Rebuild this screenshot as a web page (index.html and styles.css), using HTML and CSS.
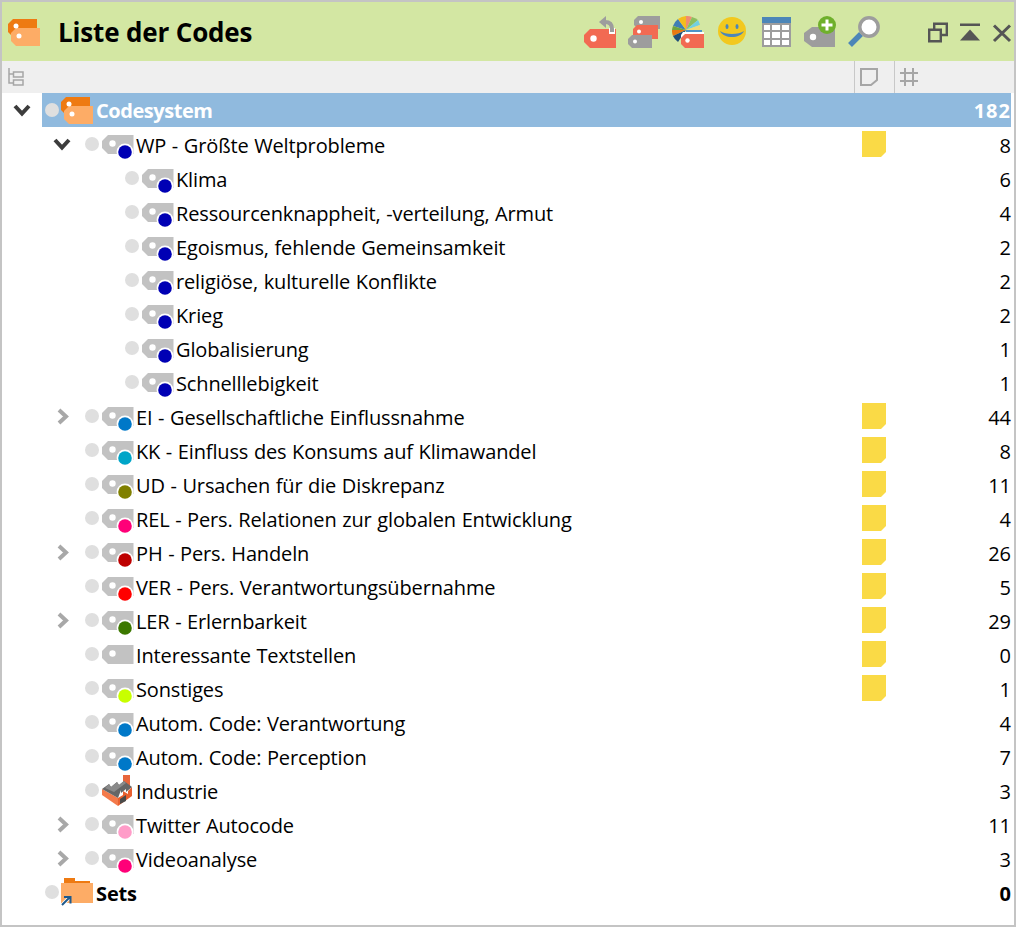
FILE: index.html
```html
<!DOCTYPE html>
<html lang="de">
<head>
<meta charset="utf-8">
<title>Liste der Codes</title>
<link rel="stylesheet" href="styles.css">
</head>
<body>
<svg class="defs" width="0" height="0" aria-hidden="true">
  <symbol id="tag" viewBox="0 0 32 28">
    <path fill="#c2c2c2" d="M6 0H31.500V19H6L0 13V6Z"/>
    <circle cx="10.500" cy="8.500" r="3.200" fill="#fff"/>
    <circle cx="23" cy="17" r="8.400" fill="#fff"/>
    <circle cx="23" cy="17" r="6.800" fill="currentColor"/>
  </symbol>
  <symbol id="tag-plain" viewBox="0 0 32 28">
    <path fill="#c2c2c2" d="M6 0H31.500V19H6L0 13V6Z"/>
    <circle cx="10.500" cy="8.500" r="3.200" fill="#fff"/>
  </symbol>
  <symbol id="codes" viewBox="0 0 32 27">
    <path fill="#ee7a12" d="M5 0H29V18H5L0 13V5Z"/>
    <path fill="#fdac66" d="M8 9H32V27H8L3 22V14Z"/>
    <circle cx="8" cy="7" r="2.500" fill="#fff"/>
    <circle cx="11" cy="17" r="2.500" fill="#fff"/>
  </symbol>
  <symbol id="memo" viewBox="0 0 24 26">
    <path fill="#fada46" d="M0 0H24V21L19 26H0Z"/>
  </symbol>
</svg>

<main class="window">
  <header class="titlebar">
    <svg class="title-icon"><use href="#codes"/></svg>
    <h1 class="title">Liste der Codes</h1>
    <div class="tools">
      <svg class="tool" viewBox="0 0 32 32">
        <path fill="#f26a52" d="M6 13H32V32H6L0 26V19Z"/>
        <circle cx="9.500" cy="22.500" r="3.200" fill="#fff"/>
        <rect x="25" y="12" width="6" height="6" fill="#fff"/>
        <path fill="none" stroke="#9d9d9d" stroke-width="4" d="M28 16V13C28 9 26 6 21 6"/>
        <path fill="#9d9d9d" d="M22 0V12L15 6Z"/>
      </svg>
      <svg class="tool" viewBox="0 0 32 32">
        <path fill="#9d9d9d" d="M10 0H32V13H10L6 9V4Z"/>
        <path fill="#f26a52" d="M9 9H30V23H9L5 19V13Z"/>
        <path fill="#9d9d9d" d="M4 19H24V32H4L0 28V23Z"/>
        <circle cx="13" cy="6" r="2" fill="#fff"/>
        <circle cx="11" cy="15.500" r="2" fill="#fff"/>
        <circle cx="7" cy="25.500" r="2" fill="#fff"/>
      </svg>
      <svg class="tool" viewBox="0 0 32 32">
        <path fill="#3f7fb5" d="M14 14L1 10A15 15 0 0 1 6 3Z"/>
        <path fill="#f3bd1e" d="M14 14L6 3A15 15 0 0 1 14 0Z"/>
        <path fill="#f08c72" d="M14 14V0A15 15 0 0 1 20 1Z"/>
        <path fill="#8cbf5e" d="M14 14L20 1A15 15 0 0 1 26 4Z"/>
        <path fill="#72cfe0" d="M14 14L26 4A15 15 0 0 1 28 9Z"/>
        <path fill="#f0dc78" d="M14 14L28 9V14Z"/>
        <path fill="#6fa53f" d="M14 14L1 10A15 15 0 0 0 0 14Z"/>
        <path fill="#e87a12" d="M14 14H0A15 15 0 0 0 1 20Z"/>
        <path fill="#214f7a" d="M14 14L1 20A15 15 0 0 0 6 26Z"/>
        <path fill="#4c94c8" d="M14 14H30V18H14Z"/>
        <path fill="#fff" d="M11 16H32V18H14L11 20V27H9V19Z"/>
        <path fill="#f26a52" d="M13 18H32V32H13L9 28V22Z"/>
        <circle cx="15.500" cy="24.500" r="2.200" fill="#fff"/>
      </svg>
      <svg class="tool" viewBox="0 0 32 32">
        <circle cx="16" cy="15" r="14" fill="#f2c81e"/>
        <ellipse cx="11" cy="10.500" rx="1.500" ry="2.500" fill="#4c86b8"/>
        <ellipse cx="21" cy="10.500" rx="1.500" ry="2.500" fill="#4c86b8"/>
        <path fill="#4c86b8" d="M4 15C9 19 23 19 28 15C24 23 8 23 4 15Z"/>
      </svg>
      <svg class="tool" viewBox="0 0 32 32">
        <rect x="2" y="1" width="29" height="30" fill="#9d9d9d"/>
        <rect x="2" y="1" width="29" height="6" fill="#4c86b8"/>
        <path fill="#fff" d="M4 9H10V14H4ZM12 9H20V14H12ZM22 9H29V14H22ZM4 16H10V22H4ZM12 16H20V22H12ZM22 16H29V22H22ZM4 24H10V29H4ZM12 24H20V29H12ZM22 24H29V29H22Z"/>
      </svg>
      <svg class="tool" viewBox="0 0 32 32">
        <path fill="#9d9d9d" d="M8 11H31V31H8L0 25V17Z"/>
        <circle cx="9" cy="21" r="3.200" fill="#fff"/>
        <circle cx="23" cy="9" r="9" fill="#6fb02c"/>
        <path stroke="#fff" stroke-width="3" d="M23 3.500V14.500M17.500 9H28.500"/>
      </svg>
      <svg class="tool" viewBox="0 0 32 32">
        <path stroke="#4c86b8" stroke-width="5.500" d="M2 29L13 18"/>
        <circle cx="21" cy="11" r="9.200" fill="#fff" stroke="#9d9d9d" stroke-width="3.400"/>
      </svg>
    </div>
    <div class="winbtns">
      <svg class="winbtn" viewBox="0 0 24 24">
        <path fill="none" stroke="#555" stroke-width="2.400" d="M8.200 9V3.700H20.800V15H15"/>
        <path fill="none" stroke="#555" stroke-width="2.400" d="M3.200 9.700H14.800V21.300H3.200Z"/>
      </svg>
      <svg class="winbtn" viewBox="0 0 24 24">
        <rect x="2" y="3.500" width="20" height="2.500" fill="#555"/>
        <path fill="#555" d="M12 9.500L22 20.500H2Z"/>
      </svg>
      <svg class="winbtn" viewBox="0 0 24 24">
        <path stroke="#555" stroke-width="3" d="M4 5.500L20 21M20 5.500L4 21"/>
      </svg>
    </div>
  </header>

  <div class="colhead">
    <svg class="col-tree" viewBox="0 0 16 18">
      <path fill="none" stroke="#a6a6a6" stroke-width="1.500" d="M1 0V15H5M1 6H5M5.500 4H15V9H5.500ZM5.500 12H15V17H5.500Z"/>
    </svg>
    <div class="col-memo">
      <svg class="col-icon" viewBox="0 0 20 20">
        <path fill="none" stroke="#a6a6a6" stroke-width="2" d="M2 2H18V13L12 18H2Z"/>
      </svg>
    </div>
    <div class="col-count">
      <svg class="col-icon" viewBox="0 0 20 20">
        <path stroke="#a6a6a6" stroke-width="2" d="M6 1V19M14 1V19M1 6H19M1 14H19"/>
      </svg>
    </div>
  </div>

  <div class="tree">
    <div class="row l0">
      <svg class="toggle open" viewBox="0 0 40 34"><path d="M13 13L20 20.500L27 13"/></svg>
      <div class="body root">
        <span class="dot"></span>
        <svg class="icon"><use href="#codes"/></svg>
        <span class="label">Codesystem</span>
        <span class="memo"></span>
        <span class="count">182</span>
      </div>
    </div>

    <div class="row l1">
      <svg class="toggle open" viewBox="0 0 40 34"><path d="M13 13L20 20.500L27 13"/></svg>
      <div class="body">
        <span class="dot"></span><svg class="icon c-navy"><use href="#tag"/></svg>
        <span class="label">WP - Größte Weltprobleme</span>
        <span class="memo"><svg class="note"><use href="#memo"/></svg></span>
        <span class="count">8</span>
      </div>
    </div>

    <div class="row l2"><span class="toggle"></span><div class="body"><span class="dot"></span><svg class="icon c-navy"><use href="#tag"/></svg><span class="label">Klima</span><span class="memo"></span><span class="count">6</span></div></div>
    <div class="row l2"><span class="toggle"></span><div class="body"><span class="dot"></span><svg class="icon c-navy"><use href="#tag"/></svg><span class="label">Ressourcenknappheit, -verteilung, Armut</span><span class="memo"></span><span class="count">4</span></div></div>
    <div class="row l2"><span class="toggle"></span><div class="body"><span class="dot"></span><svg class="icon c-navy"><use href="#tag"/></svg><span class="label">Egoismus, fehlende Gemeinsamkeit</span><span class="memo"></span><span class="count">2</span></div></div>
    <div class="row l2"><span class="toggle"></span><div class="body"><span class="dot"></span><svg class="icon c-navy"><use href="#tag"/></svg><span class="label">religiöse, kulturelle Konflikte</span><span class="memo"></span><span class="count">2</span></div></div>
    <div class="row l2"><span class="toggle"></span><div class="body"><span class="dot"></span><svg class="icon c-navy"><use href="#tag"/></svg><span class="label">Krieg</span><span class="memo"></span><span class="count">2</span></div></div>
    <div class="row l2"><span class="toggle"></span><div class="body"><span class="dot"></span><svg class="icon c-navy"><use href="#tag"/></svg><span class="label">Globalisierung</span><span class="memo"></span><span class="count">1</span></div></div>
    <div class="row l2"><span class="toggle"></span><div class="body"><span class="dot"></span><svg class="icon c-navy"><use href="#tag"/></svg><span class="label">Schnelllebigkeit</span><span class="memo"></span><span class="count">1</span></div></div>

    <div class="row l1"><svg class="toggle closed" viewBox="0 0 40 34"><path d="M17 11L24 17.500L17 24"/></svg><div class="body"><span class="dot"></span><svg class="icon c-blue"><use href="#tag"/></svg><span class="label">EI - Gesellschaftliche Einflussnahme</span><span class="memo"><svg class="note"><use href="#memo"/></svg></span><span class="count">44</span></div></div>
    <div class="row l1"><span class="toggle"></span><div class="body"><span class="dot"></span><svg class="icon c-cyan"><use href="#tag"/></svg><span class="label">KK - Einfluss des Konsums auf Klimawandel</span><span class="memo"><svg class="note"><use href="#memo"/></svg></span><span class="count">8</span></div></div>
    <div class="row l1"><span class="toggle"></span><div class="body"><span class="dot"></span><svg class="icon c-olive"><use href="#tag"/></svg><span class="label">UD - Ursachen für die Diskrepanz</span><span class="memo"><svg class="note"><use href="#memo"/></svg></span><span class="count">11</span></div></div>
    <div class="row l1"><span class="toggle"></span><div class="body"><span class="dot"></span><svg class="icon c-pink"><use href="#tag"/></svg><span class="label">REL - Pers. Relationen zur globalen Entwicklung</span><span class="memo"><svg class="note"><use href="#memo"/></svg></span><span class="count">4</span></div></div>
    <div class="row l1"><svg class="toggle closed" viewBox="0 0 40 34"><path d="M17 11L24 17.500L17 24"/></svg><div class="body"><span class="dot"></span><svg class="icon c-dark-red"><use href="#tag"/></svg><span class="label">PH - Pers. Handeln</span><span class="memo"><svg class="note"><use href="#memo"/></svg></span><span class="count">26</span></div></div>
    <div class="row l1"><span class="toggle"></span><div class="body"><span class="dot"></span><svg class="icon c-red"><use href="#tag"/></svg><span class="label">VER - Pers. Verantwortungsübernahme</span><span class="memo"><svg class="note"><use href="#memo"/></svg></span><span class="count">5</span></div></div>
    <div class="row l1"><svg class="toggle closed" viewBox="0 0 40 34"><path d="M17 11L24 17.500L17 24"/></svg><div class="body"><span class="dot"></span><svg class="icon c-green"><use href="#tag"/></svg><span class="label">LER - Erlernbarkeit</span><span class="memo"><svg class="note"><use href="#memo"/></svg></span><span class="count">29</span></div></div>
    <div class="row l1"><span class="toggle"></span><div class="body"><span class="dot"></span><svg class="icon"><use href="#tag-plain"/></svg><span class="label">Interessante Textstellen</span><span class="memo"><svg class="note"><use href="#memo"/></svg></span><span class="count">0</span></div></div>
    <div class="row l1"><span class="toggle"></span><div class="body"><span class="dot"></span><svg class="icon c-lime"><use href="#tag"/></svg><span class="label">Sonstiges</span><span class="memo"><svg class="note"><use href="#memo"/></svg></span><span class="count">1</span></div></div>
    <div class="row l1"><span class="toggle"></span><div class="body"><span class="dot"></span><svg class="icon c-blue"><use href="#tag"/></svg><span class="label">Autom. Code: Verantwortung</span><span class="memo"></span><span class="count">4</span></div></div>
    <div class="row l1"><span class="toggle"></span><div class="body"><span class="dot"></span><svg class="icon c-blue"><use href="#tag"/></svg><span class="label">Autom. Code: Perception</span><span class="memo"></span><span class="count">7</span></div></div>
    <div class="row l1"><span class="toggle"></span><div class="body"><span class="dot"></span>
      <svg class="icon factory" viewBox="0 0 32 32">
        <rect x="21" y="0" width="7" height="11" fill="#e8663c"/>
        <path fill="#f47a4a" d="M0 14V20L16 31V23Z"/>
        <path fill="#e8602f" d="M16 31L30 21V12L26 16V19L21 16V20L16 23Z"/>
        <path fill="#666" d="M0 14L7 9L9 12L15 7L17 10L22 6L30 12L24 17V14L19 18V15L16 23Z"/>
        <path fill="#8a8a8a" d="M3 13L7 9L9 12L15 7L17 10L22 6L24 8L12 17Z"/>
        <path fill="#4a4a4a" d="M18 24L24 20V26L18 29Z"/>
      </svg>
      <span class="label">Industrie</span><span class="memo"></span><span class="count">3</span></div></div>
    <div class="row l1"><svg class="toggle closed" viewBox="0 0 40 34"><path d="M17 11L24 17.500L17 24"/></svg><div class="body"><span class="dot"></span><svg class="icon c-rose"><use href="#tag"/></svg><span class="label">Twitter Autocode</span><span class="memo"></span><span class="count">11</span></div></div>
    <div class="row l1"><svg class="toggle closed" viewBox="0 0 40 34"><path d="M17 11L24 17.500L17 24"/></svg><div class="body"><span class="dot"></span><svg class="icon c-pink"><use href="#tag"/></svg><span class="label">Videoanalyse</span><span class="memo"></span><span class="count">3</span></div></div>

    <div class="row l0">
      <span class="toggle"></span>
      <div class="body strong">
        <span class="dot"></span>
        <svg class="icon" viewBox="0 0 32 32">
          <path fill="#ee7a12" d="M3 0H14V3H29V6H3Z"/>
          <path fill="#fdac66" d="M0 5H32V25H0Z"/>
          <path fill="none" stroke="#fff" stroke-width="3.500" d="M2 26L8 20"/>
          <path fill="none" stroke="#1f5a8c" stroke-width="2" d="M1 27L9 19M3 19H9.500V25.500"/>
        </svg>
        <span class="label">Sets</span>
        <span class="memo"></span>
        <span class="count">0</span>
      </div>
    </div>
  </div>
</main>
</body>
</html>
```
FILE: styles.css
```css
* { box-sizing: border-box; }

html, body {
  margin: 0;
  padding: 0;
  background: #fff;
}

.defs { position: absolute; }

.window {
  width: 1016px;
  height: 927px;
  border: 2px solid #c4c4c4;
  background: #fff;
  font-family: "Open Sans", "Noto Sans", sans-serif;
  color: #000;
  overflow: hidden;
}

.titlebar {
  height: 59px;
  display: flex;
  align-items: center;
  background: #d3e7a3;
  padding-left: 6px;
}

.title-icon {
  width: 32px;
  height: 27px;
  flex: none;
  margin-top: 2px;
}

.title {
  margin: 0 0 0 18px;
  font-size: 26px;
  font-weight: 700;
  line-height: 34px;
  letter-spacing: -0.16px;
}

.tools {
  margin-left: auto;
  display: flex;
  gap: 12px;
}

.tool {
  width: 32px;
  height: 32px;
  display: block;
}

.winbtns {
  display: flex;
  gap: 8px;
  margin-left: 46px;
}

.winbtn {
  width: 24px;
  height: 24px;
  display: block;
}

.colhead {
  height: 32px;
  display: flex;
  align-items: stretch;
  background: #efefef;
  padding-left: 6px;
}

.col-tree {
  width: 16px;
  height: 18px;
  align-self: center;
  margin-right: auto;
}

.col-memo {
  width: 40px;
  border-left: 1px solid #c8c8c8;
  display: flex;
  align-items: center;
  padding-left: 4px;
}

.col-count {
  width: 120px;
  border-left: 1px solid #c8c8c8;
  display: flex;
  align-items: center;
  padding-left: 4px;
}

.col-icon {
  width: 20px;
  height: 20px;
}

.tree {
  padding-right: 3px;
}

.row {
  height: 34px;
  display: flex;
}

.l1 { padding-left: 40px; }
.l2 { padding-left: 80px; }

.toggle {
  width: 40px;
  height: 34px;
  flex: none;
  display: block;
}

.toggle path {
  fill: none;
  stroke-width: 4;
}

.toggle.open path { stroke: #3c3c3c; }
.toggle.closed path { stroke: #a8a8a8; }

.body {
  flex: 1;
  min-width: 0;
  display: flex;
  align-items: center;
  font-size: 20px;
  line-height: 34px;
  letter-spacing: -0.14px;
  word-spacing: 0.6px;
}

.root {
  background: #90bade;
  color: #fff;
  font-weight: 700;
  letter-spacing: -0.45px;
}

.strong { font-weight: 700; }

.dot {
  width: 20px;
  flex: none;
  display: flex;
  justify-content: center;
}

.dot::before {
  content: "";
  width: 14px;
  height: 14px;
  border-radius: 50%;
  background: #dfdfdf;
}

.icon {
  width: 32px;
  height: 28px;
  flex: none;
  align-self: flex-start;
  margin-top: 8px;
}

.root .icon {
  height: 27px;
  margin: 4px 1px 0 -1px;
}

.strong .icon {
  height: 32px;
  margin: 3px 1px 0 -1px;
}

.factory {
  height: 32px;
  margin-top: 2px;
}

.label {
  margin: 4px 0 0 2px;
  flex: 1;
  min-width: 0;
  white-space: nowrap;
}

.root .label { margin-top: 2px; }

.memo {
  width: 40px;
  height: 34px;
  flex: none;
  padding: 4px 0 0 8px;
}

.note {
  display: block;
  width: 24px;
  height: 26px;
}

.count {
  width: 117px;
  flex: none;
  margin-top: 4px;
  text-align: right;
  letter-spacing: 0;
}

.root .count {
  margin-top: 2px;
  letter-spacing: 1px;
}

.c-navy { color: #0000b4; }
.c-blue { color: #0078c8; }
.c-cyan { color: #00a5c8; }
.c-olive { color: #808000; }
.c-pink { color: #ff0078; }
.c-dark-red { color: #be0000; }
.c-red { color: #ff0000; }
.c-green { color: #3c7800; }
.c-lime { color: #c8ff00; }
.c-rose { color: #ff9cc8; }
```
